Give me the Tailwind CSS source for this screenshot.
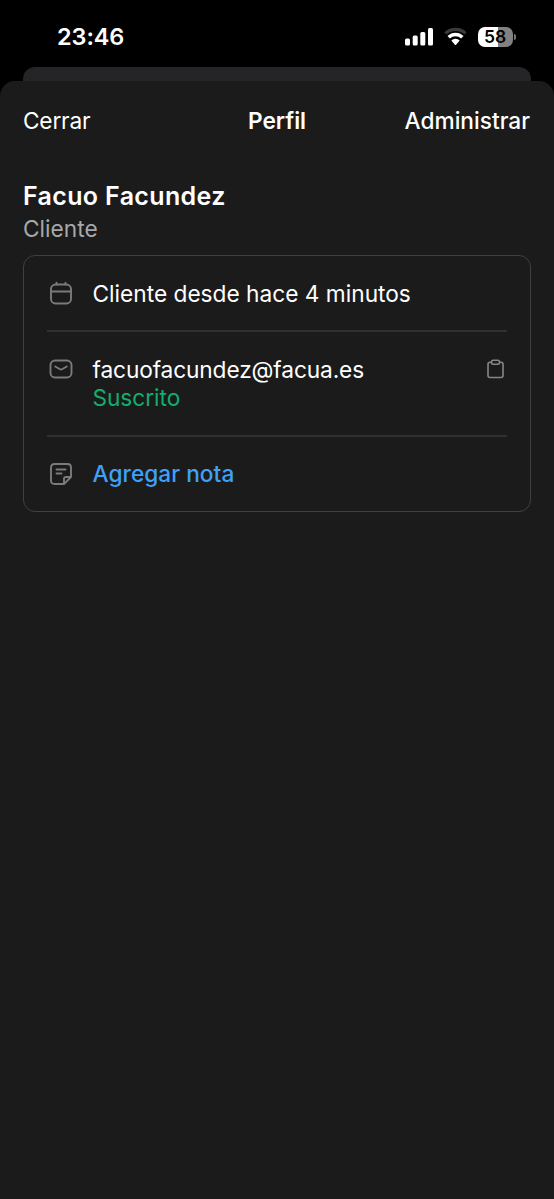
<!DOCTYPE html>
<html lang="es">
<head>
<meta charset="utf-8">
<title>Perfil</title>
<script src="https://cdn.jsdelivr.net/npm/@tailwindcss/browser@4"></script>
</head>
<body class="bg-black">
<div class="w-[554px] h-[1199px] flex flex-col overflow-hidden bg-black text-white font-['Inter',sans-serif] text-[22.7px] leading-[29px]">
  <div class="h-[67px] shrink-0 flex items-start justify-between pl-[57px] pr-[38px]">
    <span class="mt-[22px] font-semibold tracking-[-0.1px] text-[23.5px]">23:46</span>
    <div class="mt-[27px] flex items-start">
      <svg class="w-[28px] h-[20px]" viewBox="0 0 28 20" fill="#fff">
        <rect x="0" y="11.500" width="5" height="7" rx="1.500"/><rect x="7.700" y="8.500" width="5" height="10" rx="1.500"/><rect x="15.300" y="5" width="5" height="13.500" rx="1.500"/><rect x="23" y="1" width="5" height="17.500" rx="1.500"/>
      </svg>
      <svg class="ml-[11px] w-[23px] h-[20px]" viewBox="0 0 23 20">
        <path d="M.3 5.200A16.200 16.200 0 0 1 22.700 5.200L20.500 7.500A13 13 0 0 0 2.500 7.500Z" fill="#3a3a3a"/>
        <path d="M3.500 9A11.200 11.200 0 0 1 19.500 9L17.100 11.600A8 8 0 0 0 5.900 11.600Z" fill="#fff"/>
        <path d="M7.300 13A5.900 5.900 0 0 1 15.700 13L12.100 17.300Q11.500 17.900 10.900 17.300Z" transform="translate(0 .5)" fill="#fff"/>
      </svg>
      <div class="ml-[11px] w-[35px] h-[20px] rounded-[7px] bg-[linear-gradient(90deg,#fff_58%,#818181_58%)] text-black text-[17.5px] leading-[20px] font-semibold text-center">58</div>
      <div class="ml-[1.5px] mt-[7px] w-[2px] h-[6px] rounded-r-full bg-[#777]"></div>
    </div>
  </div>
  <div class="mx-[23px] h-[14px] shrink-0 rounded-t-[12px] bg-[#252527]"></div>
  <main class="flex-1 rounded-t-[15px] bg-[#1b1b1b] px-[23px]">
    <header class="h-[79px] grid grid-cols-[1fr_auto_1fr] items-center">
      <span class="tracking-[-0.2px]">Cerrar</span>
      <span class="font-semibold">Perfil</span>
      <span class="font-medium text-right pr-px">Administrar</span>
    </header>
    <h1 class="mt-[20px] h-[32px] leading-[32px] text-[25px] font-semibold tracking-[0.35px]">Facuo Facundez</h1>
    <p class="mt-[2px] text-[#a8a8a8]">Cliente</p>
    <section class="mt-[12px] w-[508px] h-[257px] rounded-[12px] border border-[#404040] px-[23px] flex flex-col">
      <div class="h-[74px] flex items-start pt-[23px]">
        <svg class="w-[28px] h-[28px] mr-[17.5px] mt-px" viewBox="0 0 28 28" fill="none" stroke="#7b7b7b" stroke-width="1.900" stroke-linecap="round"><rect x="4" y="4.500" width="20" height="19" rx="4.500"/><path d="M4 11.500H24M9.500 2.800V4.500M18.500 2.800V4.500"/></svg>
        <span>Cliente desde hace 4 minutos</span>
      </div>
      <div class="h-[107px] border-y-2 border-[#303030] flex items-start pt-[23px]">
        <svg class="w-[28px] h-[28px] mr-[17.5px]" viewBox="0 0 28 28" fill="none" stroke="#7b7b7b" stroke-width="1.900" stroke-linecap="round" stroke-linejoin="round"><rect x="3.500" y="5.500" width="21" height="17" rx="4.500"/><path d="M8.200 11.500L13 14.300Q14 14.900 15 14.300L19.800 11.500"/></svg>
        <div><div class="tracking-[-0.12px]">facuofacundez@facua.es</div><div class="-mt-px text-[#10ae70] tracking-[-0.05px]">Suscrito</div></div>
        <svg class="ml-auto w-[24px] h-[28px]" viewBox="0 0 24 28" fill="none" stroke="#868686" stroke-width="1.600" stroke-linejoin="round"><path d="M8.500 7.200H7Q5 7.200 5 9.200V20.500Q5 22.500 7 22.500H18Q20 22.500 20 20.500V9.200Q20 7.200 18 7.200H16.500"/><rect x="8.500" y="5.300" width="8" height="4" rx="1.700"/></svg>
      </div>
      <div class="h-[74px] flex items-start pt-[22px]">
        <svg class="w-[28px] h-[28px] mr-[17.5px] mt-px" viewBox="0 0 28 28" fill="none" stroke="#7b7b7b" stroke-width="1.900" stroke-linecap="round" stroke-linejoin="round"><path d="M17 24H7.500Q4 24 4 20.500V7.500Q4 4 7.500 4H20.500Q24 4 24 7.500V17ZM17 24V19Q17 17 19 17H24M9.500 9.500H18.500M9.500 13.500H14.500"/></svg>
        <span class="text-[#3ea1f7] font-medium tracking-[0.03px]">Agregar nota</span>
      </div>
    </section>
  </main>
</div>
</body>
</html>
